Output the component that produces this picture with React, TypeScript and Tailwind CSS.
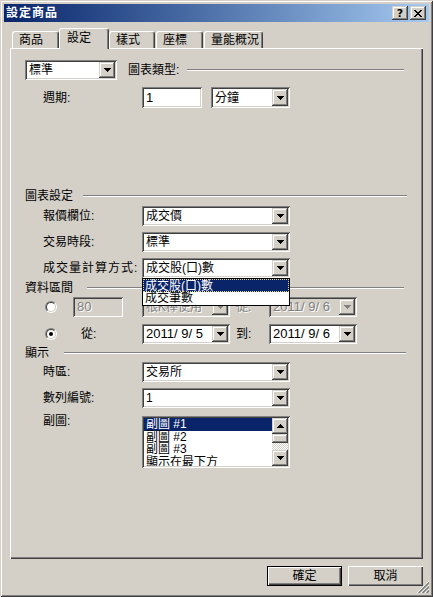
import React from "react";

const font = "font-['Liberation_Sans','Noto_Sans_CJK_TC',sans-serif]";
const sunken =
  "shadow-[inset_1px_1px_0_#808080,inset_-1px_-1px_0_#ffffff,inset_2px_2px_0_#404040,inset_-2px_-2px_0_#d4d0c8]";
const raised =
  "shadow-[inset_-1px_-1px_0_#404040,inset_1px_1px_0_#d4d0c8,inset_-2px_-2px_0_#808080,inset_2px_2px_0_#ffffff]";
const dim = "text-[#808080] [text-shadow:1px_1px_0_#ffffff]";

const Arrow = ({ up = false, disabled = false }: { up?: boolean; disabled?: boolean }) => (
  <svg
    width="7"
    height="4"
    viewBox="0 0 7 4"
    shapeRendering="crispEdges"
    className={up ? "rotate-180" : ""}
  >
    <path d="M0 0h7v1h-1v1h-1v1h-1v1h-1v-1h-1v-1h-1v-1h-1z" fill={disabled ? "#808080" : "#000000"} />
  </svg>
);

const DropButton = ({ disabled = false }: { disabled?: boolean }) => (
  <div className={`w-[16px] h-full shrink-0 flex items-center justify-center bg-[#d4d0c8] ${raised}`}>
    <Arrow disabled={disabled} />
  </div>
);

interface ComboProps {
  text: string;
  className: string;
  disabled?: boolean;
  edit?: boolean;
  latin?: boolean;
  children?: React.ReactNode;
}

const Combo = ({ text, className, disabled, edit, latin, children }: ComboProps) => (
  <div
    className={`relative flex shrink-0 p-[2px] ${sunken} ${disabled ? "bg-[#d4d0c8]" : "bg-white"} ${className}`}
  >
    <span
      className={`flex-1 whitespace-pre overflow-hidden pl-[2px] self-center ${latin ? "text-[13px]" : "text-[12px]"} ${disabled ? dim : ""}`}
    >
      {text}
    </span>
    {!edit && <DropButton disabled={disabled} />}
    {children}
  </div>
);

const Label = ({ text, className = "" }: { text: string; className?: string }) => (
  <span className={`shrink-0 whitespace-nowrap ${className}`}>{text}</span>
);

const Etched = ({ className = "" }: { className?: string }) => (
  <div className={`flex-1 h-0 border-t border-t-[#808080] border-b border-b-white ${className}`} />
);

const Group = ({ title, gap, className }: { title: string; gap: string; className: string }) => (
  <div className={`h-[12px] flex items-center ${className}`}>
    <span className="leading-[12px]">{title}</span>
    <Etched className={gap} />
  </div>
);

const Radio = ({ checked = false }: { checked?: boolean }) => (
  <div className="w-[12px] h-[12px] shrink-0 rounded-full border border-t-[#808080] border-l-[#808080] border-r-white border-b-white">
    <div className="w-full h-full rounded-full border border-t-[#404040] border-l-[#404040] border-r-[#d4d0c8] border-b-[#d4d0c8] bg-white flex items-center justify-center">
      {checked && <div className="w-[4px] h-[4px] rounded-full bg-black" />}
    </div>
  </div>
);

const Tab = ({ text, className, active }: { text: string; className: string; active?: boolean }) => (
  <div
    className={`flex items-center pl-[6px] rounded-t-[3px] border-t border-l border-t-white border-l-white border-r border-r-[#404040] shadow-[inset_-1px_0_0_#808080] bg-[#d4d0c8] ${
      active ? "relative z-10 h-[21px] -mb-[1px] pb-[3px]" : "h-[17px]"
    } ${className}`}
  >
    {text}
  </div>
);

const FieldRow = ({ label, value, mt, labelClass = "" }: { label: string; value: string; mt: string; labelClass?: string }) => (
  <div className={`h-[20px] flex items-center ${mt}`}>
    <Label text={label} className={`ml-[18px] w-[99px] ${labelClass}`} />
    <Combo text={value} className="w-[148px] h-[20px]" />
  </div>
);

export default function App() {
  const subs = ["副圖 #1", "副圖 #2", "副圖 #3", "顯示在最下方"];
  return (
    <div
      className={`relative w-[433px] h-[597px] bg-[#d4d0c8] p-[4px] flex flex-col text-[12px] text-black ${font} shadow-[inset_1px_1px_0_#d4d0c8,inset_-1px_-1px_0_#404040,inset_2px_2px_0_#ffffff,inset_-2px_-2px_0_#808080]`}
    >
      {/* title bar */}
      <div className="h-[18px] shrink-0 flex items-center pl-[2px] pr-[3px] bg-gradient-to-r from-[#0a246a] to-[#a6caf0]">
        <span className="flex-1 text-white font-bold tracking-[1px] text-[12px] leading-[18px]">設定商品</span>
        <div className={`w-[16px] h-[14px] flex items-center justify-center bg-[#d4d0c8] ${raised}`}>
          <span className="font-bold text-[11px] leading-[11px] font-['DejaVu_Sans',sans-serif]">?</span>
        </div>
        <div className={`ml-[2px] w-[16px] h-[14px] flex items-center justify-center bg-[#d4d0c8] ${raised}`}>
          <svg width="8" height="7" viewBox="0 0 8 7" shapeRendering="crispEdges">
            <path
              d="M0 0h2v1h1v1h2v-1h1v-1h2v1h-1v1h-1v1h-1v1h1v1h1v1h1v1h-2v-1h-1v-1h-2v1h-1v1h-2v-1h1v-1h1v-1h1v-1h-1v-1h-1v-1h-1z"
              fill="#000000"
            />
          </svg>
        </div>
      </div>

      {/* tabs */}
      <div className="h-[26px] shrink-0 flex items-end px-[6px]">
        <div className="flex items-end ml-[2px]">
          <Tab text="商品" className="w-[47px]" />
          <Tab text="設定" className="w-[50px] pl-[7px]" active />
          <Tab text="樣式" className="w-[46px] pl-[5px]" />
          <Tab text="座標" className="ml-[1px] w-[47px]" />
          <Tab text="量能概況" className="ml-[1px] w-[59px]" />
        </div>
      </div>

      {/* panel */}
      <div className="mx-[6px] h-[511px] shrink-0 flex flex-col pl-[15px] pr-[17px] shadow-[inset_1px_1px_0_#ffffff,inset_-1px_-1px_0_#404040,inset_-2px_-2px_0_#808080]">
        <div className="mt-[12px] h-[20px] flex items-center">
          <Combo text="標準" className="w-[92px] h-[20px]" />
          <Label text="圖表類型:" className="ml-[11px]" />
          <Etched className="ml-[8px] mr-[2px]" />
        </div>
        <div className="mt-[7px] h-[21px] flex items-center">
          <Label text="週期:" className="ml-[18px] w-[99px]" />
          <Combo text="1" className="w-[60px] h-[21px]" edit latin />
          <Combo text="分鐘" className="ml-[9px] w-[79px] h-[21px]" />
        </div>

        <Group title="圖表設定" gap="ml-[10px] -mr-[1px]" className="mt-[82px]" />
        <FieldRow label="報價欄位:" value="成交價" mt="mt-[4px]" />
        <FieldRow label="交易時段:" value="標準" mt="mt-[6px]" />
        <div className="mt-[6px] h-[20px] flex items-center">
          <Label text="成交量計算方式:" className="ml-[18px] w-[99px] tracking-[1px]" />
          <Combo text="成交股(口)數" className="w-[148px] h-[20px]">
            <div className="absolute left-0 top-full z-20 w-full bg-white border border-black">
              <div className="h-[13px] leading-[12px] pl-[1px] bg-[#0a246a] text-white border border-dotted border-[#e8d890]">
                成交股(口)數
              </div>
              <div className="h-[13px] leading-[13px] pl-[2px]">成交筆數</div>
            </div>
          </Combo>
        </div>

        <Group title="資料區間" gap="ml-[14px] mr-[2px]" className="mt-[4px]" />
        <div className="mt-[3px] h-[20px] flex items-center">
          <div className="ml-[20px]">
            <Radio />
          </div>
          <Combo text="80" className="ml-[16px] w-[50px] h-[20px]" disabled edit latin />
          <Combo text="根K棒使用" className="ml-[19px] w-[88px] h-[20px]" disabled />
          <Label text="從:" className={`ml-[6px] w-[33px] ${dim}`} />
          <Combo text="2011/ 9/ 6" className="w-[88px] h-[20px]" disabled latin />
        </div>
        <div className="mt-[7px] h-[20px] flex items-center">
          <div className="ml-[20px]">
            <Radio checked />
          </div>
          <Label text="從:" className="ml-[24px] w-[61px]" />
          <Combo text="2011/ 9/ 5" className="w-[88px] h-[20px]" latin />
          <Label text="到:" className="ml-[6px] w-[33px]" />
          <Combo text="2011/ 9/ 6" className="w-[88px] h-[20px]" latin />
        </div>

        <Group title="顯示" gap="ml-[15px]" className="mt-[3px]" />
        <FieldRow label="時區:" value="交易所" mt="mt-[3px]" />
        <FieldRow label="數列編號:" value="1" mt="mt-[6px]" />
        <div className="mt-[8px] flex items-start">
          <Label text="副圖:" className="ml-[18px] w-[99px] leading-[12px] -mt-[1px]" />
          <div className={`w-[148px] h-[52px] shrink-0 flex p-[2px] bg-white ${sunken}`}>
            <div className="flex-1 overflow-hidden">
              {subs.map((s, i) => (
                <div
                  key={s}
                  className={`h-[12.5px] leading-[13px] pl-[2px] whitespace-nowrap ${
                    i === 0 ? "bg-[#0a246a] text-white" : ""
                  }`}
                >
                  {s}
                </div>
              ))}
            </div>
            <div className="w-[16px] flex flex-col">
              <div className={`h-[16px] flex items-center justify-center bg-[#d4d0c8] ${raised}`}>
                <Arrow up />
              </div>
              <div className={`h-[9px] bg-[#d4d0c8] ${raised}`} />
              <div className="flex-1 bg-[image:repeating-conic-gradient(#d4d0c8_0_25%,#ffffff_0_50%)] bg-[length:2px_2px]" />
              <div className={`h-[16px] flex items-center justify-center bg-[#d4d0c8] ${raised}`}>
                <Arrow />
              </div>
            </div>
          </div>
        </div>
      </div>

      {/* buttons */}
      <div className="h-[34px] shrink-0 flex items-start justify-end gap-[6px] pt-[7px] px-[6px]">
        <div className="w-[75px] h-[20px] flex items-center justify-center bg-[#d4d0c8] shadow-[inset_0_0_0_1px_#000000,inset_2px_2px_0_#ffffff,inset_-2px_-2px_0_#404040,inset_-3px_-3px_0_#808080]">
          確定
        </div>
        <div className="w-[75px] h-[20px] flex items-center justify-center bg-[#d4d0c8] shadow-[inset_1px_1px_0_#ffffff,inset_-1px_-1px_0_#404040,inset_-2px_-2px_0_#808080]">
          取消
        </div>
      </div>

      {/* size grip */}
      <svg className="absolute right-[4px] bottom-[4px]" width="12" height="12" viewBox="0 0 12 12">
        <path d="M12 0L0 12M12 4L4 12M12 8L8 12" stroke="#ffffff" strokeWidth="1" />
        <path d="M12 1.5L1.5 12M12 5.5L5.5 12M12 9.5L9.5 12" stroke="#808080" strokeWidth="1.6" />
      </svg>
    </div>
  );
}
